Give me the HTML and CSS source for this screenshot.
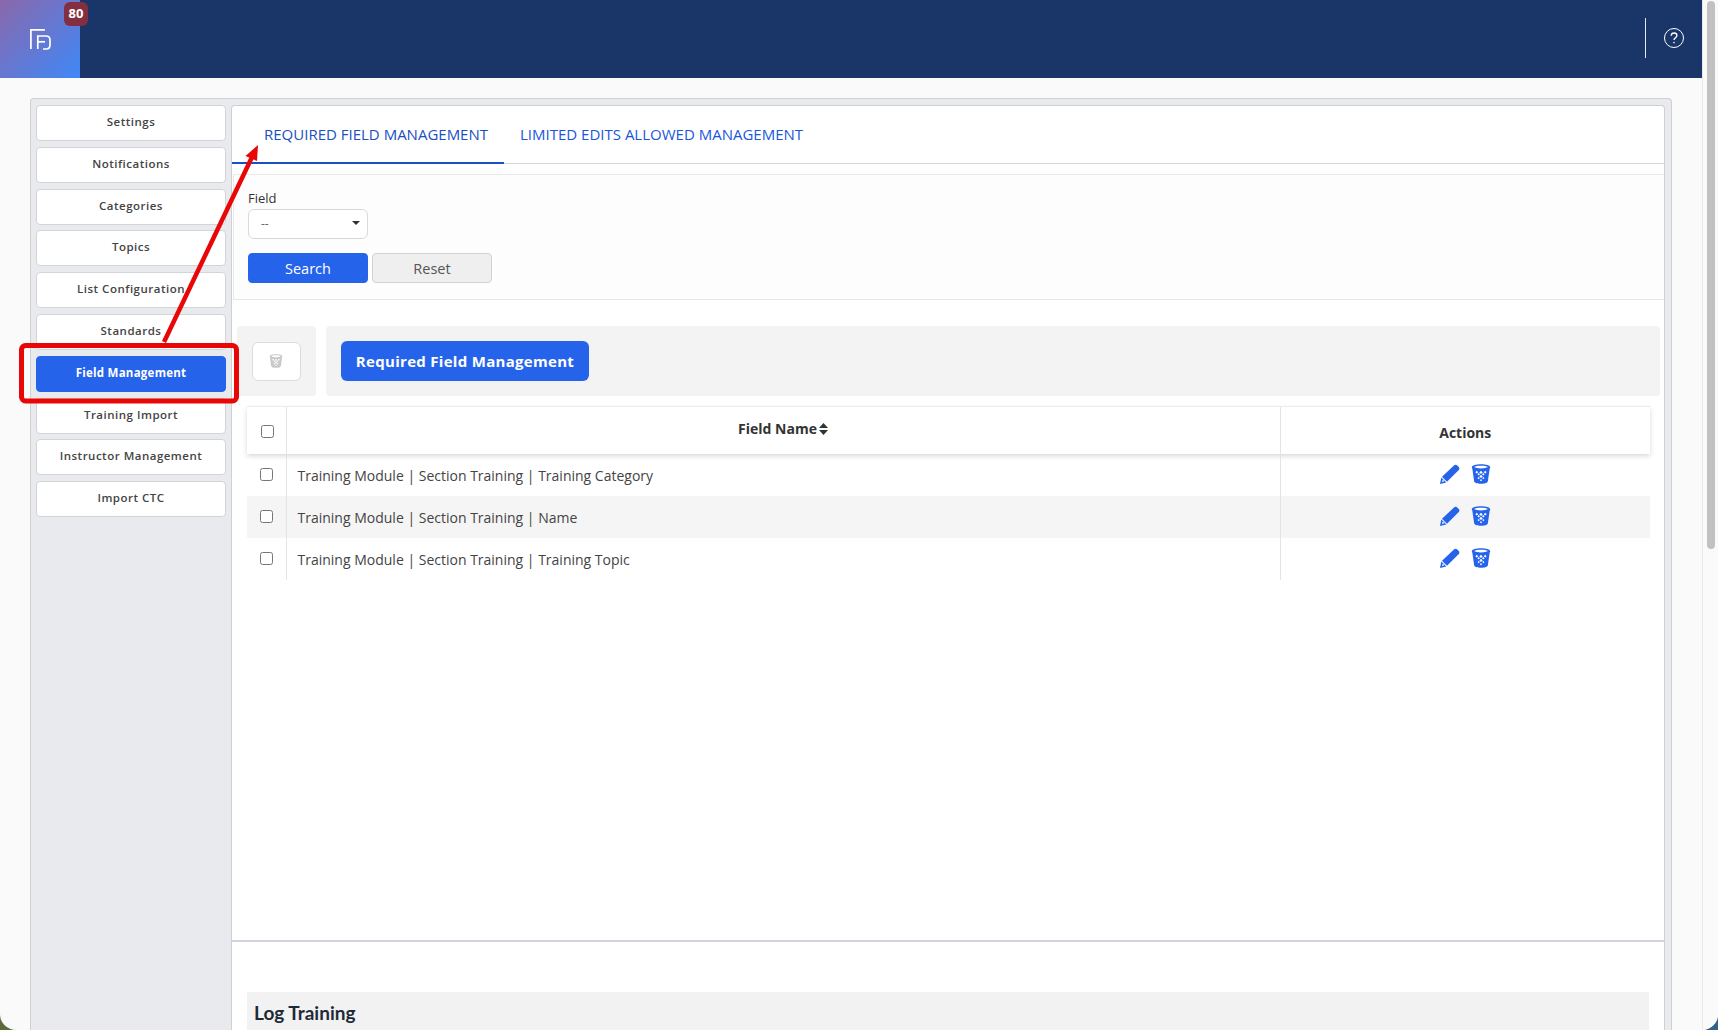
FILE: index.html
```html
<!DOCTYPE html>
<html lang="en">
<head>
<meta charset="utf-8">
<title>Field Management</title>
<link rel="stylesheet" href="styles.css">
</head>
<body>
<svg class="defs" width="0" height="0" aria-hidden="true">
  <symbol id="basket" viewBox="0 0 20 20">
    <path fill="currentColor" d="M.8 3.200C.8 1.300 5 .2 10 .2s9.200 1.100 9.200 3c0 .5-.2 1-.5 1.300L16.900 17c-.2 1.800-3 2.800-6.900 2.800S3.300 18.800 3.100 17L1.300 4.500C1 4.200.8 3.700.8 3.200z"/>
    <path fill="#fff" d="M3 3.100C4.400 2.200 7 1.700 10 1.700s5.600.5 7 1.400C15.600 4 13 4.500 10 4.500S4.400 4 3 3.100z"/>
    <g fill="#fff">
      <rect x="8.800" y="7.200" width="2.400" height="2.400" transform="rotate(45 10 8.400)"/>
      <rect x="8.800" y="11.200" width="2.400" height="2.400" transform="rotate(45 10 12.400)"/>
      <rect x="4.800" y="7.200" width="2" height="2" transform="rotate(45 5.800 8.200)"/>
      <rect x="13.200" y="7.200" width="2" height="2" transform="rotate(45 14.200 8.200)"/>
      <rect x="6.800" y="9.400" width="1.800" height="1.800" transform="rotate(45 7.700 10.300)"/>
      <rect x="11.400" y="9.400" width="1.800" height="1.800" transform="rotate(45 12.300 10.300)"/>
      <rect x="6.900" y="13.300" width="1.600" height="1.600" transform="rotate(45 7.700 14.100)"/>
      <rect x="11.500" y="13.300" width="1.600" height="1.600" transform="rotate(45 12.300 14.100)"/>
      <rect x="9.200" y="15.400" width="1.600" height="1.600" transform="rotate(45 10 16.200)"/>
    </g>
  </symbol>
  <symbol id="pencil" viewBox="0 0 20 20">
    <path fill="currentColor" d="M14.200 1.300c.8-.8 2-.8 2.800 0l1.800 1.800c.8.8.8 2 0 2.800L7 17.700l-5-5z"/>
    <path fill="currentColor" d="M1.300 13.400l5 5L0 20z"/>
    <path fill="#fff" d="M2.700 15.600l1.700 1.700-2.400.7z"/>
  </symbol>
</svg>

<div class="window">
  <div class="app">
    <header class="topbar">
      <div class="brand">
        <svg class="brand-logo" width="22" height="22" viewBox="0 0 22 22" fill="none" stroke="#fff" stroke-width="1.700">
          <path d="M.9 20V.9h14"/>
          <path d="M7.800 20V7h8.200c2.400 0 4 1.600 4 4v5c0 2.400-1.600 4-4 4h-3"/>
          <path d="M7.800 12.800h7.200"/>
        </svg>
        <span class="badge">80</span>
      </div>
      <div class="topbar-right">
        <svg class="help" width="20" height="20" viewBox="0 0 20 20" fill="none" stroke="#fff" stroke-width="1">
          <circle cx="10" cy="10" r="9.500"/>
          <path d="M7.200 7.800C7.300 6 8.500 5 10.100 5c1.600 0 2.800 1 2.800 2.500 0 2.200-2.900 2.300-2.900 4.500" stroke-width="1.300"/>
          <circle cx="10" cy="14.600" r=".8" fill="#fff" stroke="none"/>
        </svg>
      </div>
    </header>

    <main class="content">
      <div class="shell">
        <nav class="sidenav">
          <a class="nav-btn">Settings</a>
          <a class="nav-btn">Notifications</a>
          <a class="nav-btn">Categories</a>
          <a class="nav-btn">Topics</a>
          <a class="nav-btn">List Configuration</a>
          <a class="nav-btn">Standards</a>
          <a class="nav-btn is-active">Field Management</a>
          <a class="nav-btn">Training Import</a>
          <a class="nav-btn">Instructor Management</a>
          <a class="nav-btn">Import CTC</a>
        </nav>

        <section class="panel">
          <div class="tabs">
            <a class="tab is-active">REQUIRED FIELD MANAGEMENT</a>
            <a class="tab">LIMITED EDITS ALLOWED MANAGEMENT</a>
          </div>

          <form class="filter">
            <label class="filter-label">Field</label>
            <div class="select"><span>--</span><i class="caret"></i></div>
            <div class="filter-actions">
              <button type="button" class="btn btn-primary">Search</button>
              <button type="button" class="btn btn-muted">Reset</button>
            </div>
          </form>

          <div class="toolbar">
            <div class="tool-left">
              <button type="button" class="icon-btn"><svg width="14" height="14" class="icon-muted"><use href="#basket"/></svg></button>
            </div>
            <div class="tool-right">
              <button type="button" class="btn-add">Required Field Management</button>
            </div>
          </div>

          <table class="grid">
            <colgroup>
              <col class="col-check"><col><col class="col-actions">
            </colgroup>
            <thead>
              <tr>
                <th class="th-check"><input type="checkbox"></th>
                <th class="th-name"><span>Field Name</span><svg class="sort" width="9" height="12" viewBox="0 0 9 12"><path fill="#333" d="M4.500 0L9 5H0zM4.500 12L0 7h9z"/></svg></th>
                <th class="th-actions">Actions</th>
              </tr>
            </thead>
            <tbody>
              <tr>
                <td><input type="checkbox"></td>
                <td>Training Module | Section Training | Training Category</td>
                <td><div class="actions"><svg width="20" height="20"><use href="#pencil"/></svg><svg width="20" height="20"><use href="#basket"/></svg></div></td>
              </tr>
              <tr>
                <td><input type="checkbox"></td>
                <td>Training Module | Section Training | Name</td>
                <td><div class="actions"><svg width="20" height="20"><use href="#pencil"/></svg><svg width="20" height="20"><use href="#basket"/></svg></div></td>
              </tr>
              <tr>
                <td><input type="checkbox"></td>
                <td>Training Module | Section Training | Training Topic</td>
                <td><div class="actions"><svg width="20" height="20"><use href="#pencil"/></svg><svg width="20" height="20"><use href="#basket"/></svg></div></td>
              </tr>
            </tbody>
          </table>

          <div class="log">
            <h2 class="log-title">Log Training</h2>
          </div>
        </section>
      </div>
    </main>
  </div>
  <div class="scrolltrack"><div class="scrollthumb"></div></div>
</div>

<svg class="annotation" width="300" height="420" viewBox="0 0 300 420" aria-hidden="true">
  <rect x="21.500" y="345.500" width="215" height="55.500" rx="4" fill="none" stroke="#e80606" stroke-width="5"/>
  <path d="M164 342L253 155" stroke="#e80606" stroke-width="4.500" fill="none"/>
  <path d="M258 145L257 161L245.500 156z" fill="#e80606"/>
</svg>
</body>
</html>
```
FILE: styles.css
```css
* { box-sizing: border-box; }
html, body { height: 100%; }
body {
  margin: 0;
  overflow: hidden;
  font-family: "Open Sans", "Noto Sans", sans-serif;
  background: linear-gradient(90deg, #5d6b3a 0, #5d6b3a 50%, #33618c 50%, #33618c 100%);
  position: relative;
}
.defs { position: absolute; }

.window {
  display: flex;
  height: 1030px;
  width: 1718px;
  border-radius: 0 0 16px 16px;
  overflow: hidden;
  background: #fafafa;
}
.app {
  flex: 1;
  min-width: 0;
  display: flex;
  flex-direction: column;
}
.scrolltrack {
  width: 16px;
  border-left: 1px solid #e8e8e8;
  background: #fafafa;
  padding: 1px 3px 0 4px;
}
.scrollthumb {
  height: 548px;
  border-radius: 4px;
  background: #c1c1c1;
}

.topbar {
  height: 78px;
  flex: none;
  display: flex;
  justify-content: space-between;
  background: #1a3668;
}
.brand {
  position: relative;
  width: 80px;
  background: linear-gradient(135deg, #8a68ab 0%, #3f88f8 100%);
  padding: 29px 0 0 30px;
}
.brand-logo { display: block; }
.badge {
  position: absolute;
  top: 2px;
  left: 64px;
  width: 24px;
  height: 24px;
  border-radius: 6px;
  background: #832f3f;
  color: #fff;
  font-size: 13px;
  font-weight: 700;
  line-height: 23px;
  text-align: center;
}
.topbar-right {
  display: flex;
  align-items: center;
  height: 40px;
  margin-top: 18px;
  padding-left: 18px;
  margin-right: 18px;
  border-left: 1px solid #e6e9f0;
}
.help { display: block; }

.content {
  flex: 1;
  min-height: 0;
  padding: 20px 30px 0;
}
.shell {
  display: flex;
  gap: 5px;
  height: 100%;
  padding: 6px 6px 0 5px;
  background: #e9eaee;
  border: 1px solid #cfd0d4;
  border-bottom: 0;
  border-radius: 4px 4px 0 0;
}

.sidenav {
  width: 190px;
  flex: none;
  display: flex;
  flex-direction: column;
  gap: 5.8px;
}
.nav-btn {
  display: block;
  height: 36px;
  line-height: 31px;
  text-align: center;
  font-size: 11.500px;
  font-weight: 600;
  letter-spacing: .5px;
  color: #444;
  background: #fff;
  border: 1px solid #d3d4d8;
  border-radius: 4px;
}
.nav-btn.is-active {
  background: #2563eb;
  border-color: #2563eb;
  color: #fff;
  font-weight: 700;
  letter-spacing: .25px;
}

.panel {
  flex: 1;
  min-width: 0;
  background: #fff;
  border: 1px solid #cfd0d4;
  border-bottom: 0;
  border-radius: 4px 4px 0 0;
  display: flex;
  flex-direction: column;
}
.tabs {
  flex: none;
  display: flex;
  height: 58px;
  border-bottom: 1px solid #d5d7dc;
}
.tab {
  height: 58px;
  padding: 0 16px;
  line-height: 56px;
  font-size: 15px;
  color: #1a56dc;
}
.tab:first-child { padding-left: 32px; }
.tab.is-active {
  color: #1a50c0;
  border-bottom: 2px solid #1a50c0;
}

.filter {
  flex: none;
  height: 126px;
  margin: 10px 0 0 1px;
  padding: 13px 14px 0;
  background: #fdfdfd;
  border-top: 1px solid #eaeaea;
  border-bottom: 1px solid #e6e6e6;
  border-left: 1px solid #eaeaea;
}
.filter-label {
  display: block;
  height: 21px;
  font-size: 13px;
  line-height: 20px;
  color: #333;
}
.select {
  width: 120px;
  height: 30px;
  display: flex;
  align-items: center;
  justify-content: space-between;
  padding: 0 7px 2px 12px;
  background: #fff;
  border: 1px solid #d9d9d9;
  border-radius: 6px;
  font-size: 12px;
  color: #666;
}
.caret {
  width: 0;
  height: 0;
  border: 4px solid transparent;
  border-top: 4px solid #333;
  border-bottom: 0;
}
.filter-actions {
  display: flex;
  gap: 4px;
  margin-top: 14px;
}
.btn {
  width: 120px;
  height: 30px;
  border-radius: 4px;
  font-family: inherit;
  font-size: 14.500px;
  padding: 0;
}
.btn-primary {
  background: #2563eb;
  border: 1px solid #2563eb;
  color: #fff;
  font-weight: 500;
}
.btn-muted {
  background: #efefef;
  border: 1px solid #d2d2d2;
  color: #555;
}

.toolbar {
  flex: none;
  display: flex;
  gap: 10px;
  height: 70px;
  margin: 26px 4px 0 5px;
}
.tool-left {
  width: 79px;
  flex: none;
  display: flex;
  align-items: center;
  padding-left: 15px;
  background: #f3f3f3;
  border-radius: 4px;
}
.icon-btn {
  width: 49px;
  height: 39px;
  padding: 0 1px 1px 0;
  display: flex;
  align-items: center;
  justify-content: center;
  background: #fff;
  border: 1px solid #dcdcdc;
  border-radius: 6px;
}
.icon-muted { color: #c9c9c9; }
.tool-right {
  flex: 1;
  display: flex;
  align-items: center;
  padding-left: 15px;
  background: #f3f3f3;
  border-radius: 4px;
}
.btn-add {
  width: 248px;
  height: 40px;
  padding: 0;
  background: #2563eb;
  border: 0;
  border-radius: 6px;
  color: #fff;
  font-family: inherit;
  font-size: 15px;
  font-weight: 700;
  letter-spacing: .3px;
}

.grid {
  flex: none;
  width: 1403px;
  margin: 10px 0 0 15px;
  border-collapse: collapse;
  table-layout: fixed;
  font-size: 14px;
  color: #444;
}
.col-check { width: 39px; }
.col-actions { width: 370px; }
.grid th {
  height: 47px;
  padding: 0;
  background: #fff;
  font-size: 14px;
  font-weight: 700;
  color: #333;
  text-align: center;
  border-left: 1px solid #e4e4e4;
  border-top: 1px solid #ebebeb;
}
.grid th:first-child { border-left: 0; }
.grid thead tr { box-shadow: 0 2px 5px rgba(0,0,0,.16); }
.th-check input { position: relative; left: 2px; top: -1px; }
.th-name span { position: relative; top: -2px; }
.th-actions { padding-top: 4px !important; }
.sort { margin-left: 2px; position: relative; top: -1px; }
.grid td {
  height: 42px;
  padding: 2px 10px 0 11px;
  border-left: 1px solid #e4e4e4;
}
.grid td:first-child { border-left: 0; padding: 0; text-align: center; }
.grid tbody tr:nth-child(2) td { background: #f5f5f5; }
input[type="checkbox"] { margin: 0 2px 0 0; vertical-align: middle; }
.grid td:first-child input { position: relative; top: -2px; left: 1px; }
.actions {
  display: flex;
  justify-content: center;
  gap: 11px;
  color: #2563eb;
  margin: -3px 0 0 0;
}

.log {
  flex: none;
  margin-top: 360px;
  height: 120px;
  padding: 50px 15px 0;
  border-top: 2px solid #d0d4e0;
}
.log-title {
  margin: 0;
  height: 60px;
  padding: 9px 7px 0;
  background: #f2f2f2;
  font-family: Lato, "Noto Sans", sans-serif;
  font-size: 19px;
  font-weight: 700;
  color: #1f2a37;
}

.annotation {
  position: absolute;
  left: 0;
  top: 0;
  pointer-events: none;
}
```
